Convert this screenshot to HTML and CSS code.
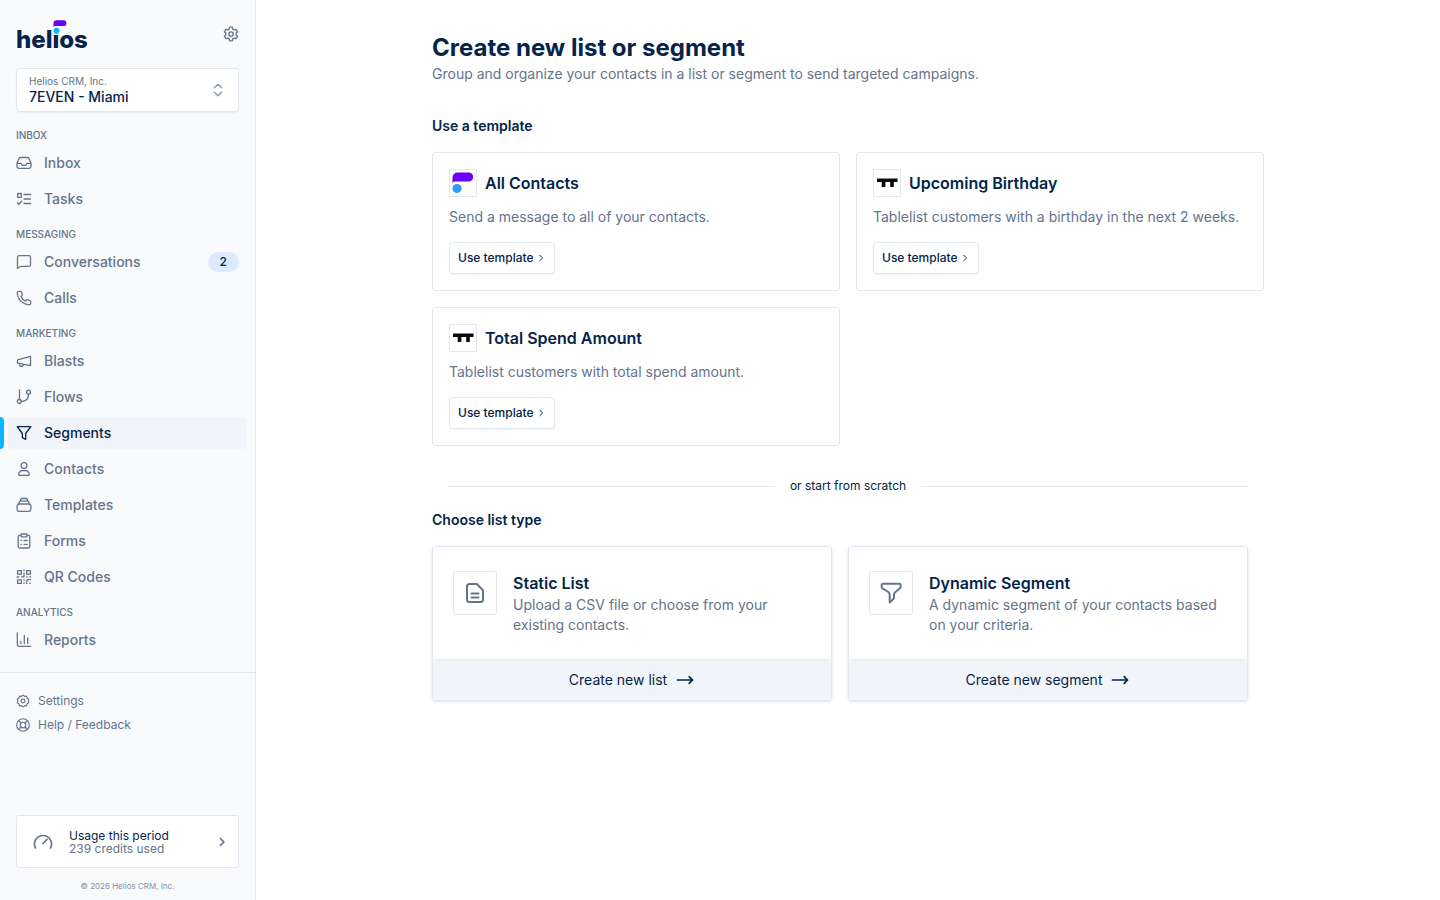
FILE: index.html
```html
<!DOCTYPE html>
<html lang="en">
<head>
<meta charset="utf-8">
<meta name="viewport" content="width=device-width, initial-scale=1">
<title>Create new list or segment</title>
<link rel="stylesheet" href="styles.css">
</head>
<body>
<svg class="sprite" aria-hidden="true">
  <symbol id="tablelist" viewBox="0 0 26 26"><path d="M3 8.500h20.500v3.500h-3.700v5h-3.600v-5h-4.800v5H7.700v-5H3z" fill="#0a0a0a"/></symbol>
  <symbol id="chevron" viewBox="0 0 16 16"><path d="M6 3.500 10.500 8 6 12.500"/></symbol>
  <symbol id="arrow" viewBox="0 0 20 12"><path d="M2.500 6h15M14.200 2.700 17.500 6l-3.300 3.300"/></symbol>
</svg>
<div class="app">
  <aside class="sidebar">
    <header class="brand">
      <a class="logo" href="#">helios<svg class="logo-mark" viewBox="0 0 14 15" aria-hidden="true"><circle cx="3.500" cy="10.500" r="4.300" fill="#f8fafc"/><path d="M.5 7V3.600A3.300 3.300 0 0 1 3.800.3h6.700a2.900 2.900 0 0 1 0 5.800H2.200C1.300 6.100.8 6.400.5 7z" fill="#6a00f4"/><circle cx="3.500" cy="10.800" r="3" fill="#0ab5ff"/></svg></a>
      <button class="icon-button" aria-label="Preferences"><svg class="icon" viewBox="0 0 16 16"><path d="M6.700 1.200h2.600l.5 1.900 1.300.8 1.900-.6 1.700 2.500-1.500 1.300v1.800l1.500 1.300-1.700 2.500-1.900-.6-1.300.8-.5 1.900H6.700l-.5-1.900-1.300-.8-1.900.6-1.700-2.500 1.500-1.300V7.100L1.300 5.800 3 3.300l1.900.6 1.300-.8z"/><circle cx="8" cy="8" r="2.200"/></svg></button>
    </header>
    <button class="account">
      <span class="account-text"><span class="account-org">Helios CRM, Inc.</span><span class="account-name">7EVEN - Miami</span></span>
      <svg class="icon faint" viewBox="0 0 16 16"><path d="M4.300 5.800 8 2.200l3.700 3.600M4.300 10.200 8 13.800l3.700-3.600"/></svg>
    </button>
    <nav class="nav">
      <h2 class="nav-label">INBOX</h2>
      <a class="nav-item" href="#"><svg class="icon" viewBox="0 0 16 16"><path d="M1 8.300h3.500c.5 0 .8.300 1 .7l.3.600c.2.400.6.700 1 .7h2.400c.4 0 .8-.3 1-.7l.3-.6c.2-.4.5-.7 1-.7H15M4.500 2.500h7c.7 0 1.200.3 1.500.9l1.700 4.100c.2.500.3.800.3 1.300v2.700c0 1-.8 1.800-1.800 1.800H2.800c-1 0-1.800-.8-1.800-1.800V8.800c0-.5.100-.8.300-1.300L3 3.400c.3-.6.800-.9 1.500-.9z"/></svg>Inbox</a>
      <a class="nav-item" href="#"><svg class="icon" viewBox="0 0 16 16"><path d="M8 3.500h6.500M8 8h6.500M8 12.500h6.500M1.700 2.500h3.600v3.800H1.700zM1.300 11.600l1.500 1.600 2.800-3"/></svg>Tasks</a>
      <h2 class="nav-label">MESSAGING</h2>
      <a class="nav-item" href="#"><svg class="icon" viewBox="0 0 16 16"><path d="M1.500 14.300V3.200c0-.9.600-1.500 1.500-1.500h10c.9 0 1.500.6 1.500 1.500v7.600c0 .9-.6 1.500-1.500 1.500H5.200c-.5 0-.8.200-1.200.5z"/></svg>Conversations<span class="badge">2</span></a>
      <a class="nav-item" href="#"><svg class="icon" viewBox="0 0 16 16"><path d="M1.300 2.800C1.300 1.900 2 1.300 2.800 1.300h1.600c.6 0 1 .4 1.200.9l.7 2.200c.1.500 0 1-.4 1.300l-.9.8c.8 1.900 2.300 3.600 4.500 4.600l.8-1c.4-.4.900-.5 1.300-.4l2.200.8c.5.200.9.600.9 1.200v1.600c0 .8-.7 1.500-1.500 1.500C6.800 14.500 1.300 9.200 1.300 2.800z"/></svg>Calls</a>
      <h2 class="nav-label">MARKETING</h2>
      <a class="nav-item" href="#"><svg class="icon" viewBox="0 0 16 16"><path d="M1.500 6.900 14.500 3.300v9.400L1.500 10.200zM3.600 10.700v.8c0 1 .8 1.900 1.800 1.900s1.900-.8 1.900-1.900"/></svg>Blasts</a>
      <a class="nav-item" href="#"><svg class="icon" viewBox="0 0 16 16"><path d="M3.500 1v9.500M12.500 5.300c0 4.200-2.600 7-7 7"/><circle cx="3.300" cy="12.500" r="2"/><circle cx="12.500" cy="3.200" r="2"/></svg>Flows</a>
      <a class="nav-item active" href="#" aria-current="page"><svg class="icon" viewBox="0 0 16 16"><path d="M1.200 1.700h13.600L9.700 8.500v5.800l-3.400-1.700V8.500z"/></svg>Segments</a>
      <a class="nav-item" href="#"><svg class="icon" viewBox="0 0 16 16"><circle cx="8" cy="4.500" r="2.900"/><path d="M3.200 14.300c-.3 0-.5-.2-.5-.5 0-2.500 1.800-4.300 4.100-4.300h2.400c2.300 0 4.100 1.800 4.100 4.300 0 .3-.2.500-.5.500z"/></svg>Contacts</a>
      <a class="nav-item" href="#"><svg class="icon" viewBox="0 0 16 16"><path d="M4.600 4V3c0-.9.600-1.500 1.500-1.500h3.800c.9 0 1.500.6 1.500 1.500v1M3 7V5.700C3 4.800 3.600 4.200 4.500 4.200h7c.9 0 1.500.6 1.500 1.500V7"/><rect x="1.200" y="7" width="13.600" height="7.300" rx="1.800"/></svg>Templates</a>
      <a class="nav-item" href="#"><svg class="icon" viewBox="0 0 16 16"><path d="M5.200 2.300H3.700c-.8 0-1.500.6-1.500 1.500v9.700c0 .9.700 1.500 1.500 1.500h8.600c.8 0 1.500-.6 1.500-1.500V3.800c0-.9-.7-1.500-1.500-1.500h-1.500M5.200 1h5.600v2.800H5.200zM5 7.500h.5M8 7.500h3.200M5 11.300h.5M8 11.300h3.200"/></svg>Forms</a>
      <a class="nav-item" href="#"><svg class="icon" viewBox="0 0 16 16"><path d="M1.600 1.600h3.800v3.600H1.600zM10.600 1.600h3.800v3.600h-3.800zM1.600 10.800h3.800v3.600H1.600zM8 1.200v.6M8 4.300v3.500H5.700M1.200 8h1.400M10.700 8h.5M13.700 8h1M8 10.700v.5M8 13.900v.6M10.800 14.500v-3c0-.5.300-.8.800-.8h2.900M13.600 14.200h.6"/></svg>QR Codes</a>
      <h2 class="nav-label">ANALYTICS</h2>
      <a class="nav-item" href="#"><svg class="icon" viewBox="0 0 16 16"><path d="M1.300 1v11.500c0 1 .7 1.800 1.700 1.800h11.700M4.900 9.500v2M8.300 3.300v8.200M11.700 5.900v5.600"/></svg>Reports</a>
    </nav>
    <div class="secondary">
      <a class="secondary-item" href="#"><svg class="icon" viewBox="0 0 16 16"><path d="m8 1.300 1.800 1.400 2.300-.2.500 2.200 2 1.200-.8 2.100.8 2.100-2 1.200-.5 2.200-2.300-.2L8 14.700l-1.800-1.400-2.300.2-.5-2.200-2-1.200.8-2.100-.8-2.100 2-1.200.5-2.200 2.300.2z"/><circle cx="8" cy="8" r="2.200"/></svg>Settings</a>
      <a class="secondary-item" href="#"><svg class="icon" viewBox="0 0 16 16"><circle cx="8" cy="8" r="7.200"/><circle cx="8" cy="8" r="3.200"/><path d="m3 3 2.700 2.700M13 3l-2.700 2.700M3 13l2.700-2.700M13 13l-2.700-2.700"/></svg>Help / Feedback</a>
    </div>
    <a class="usage" href="#">
      <svg class="gauge" viewBox="0 0 20 20"><path d="M2.500 16A8.500 8.500 0 1 1 17.500 16M10 11.500l4-4.200"/></svg>
      <span class="usage-text"><span class="usage-title">Usage this period</span><span>239 credits used</span></span>
      <svg class="usage-chevron" aria-hidden="true"><use href="#chevron"/></svg>
    </a>
    <footer class="copyright">© 2026 Helios CRM, Inc.</footer>
  </aside>
  <main class="main">
    <div class="content">
      <h1 class="title">Create new list or segment</h1>
      <p class="text">Group and organize your contacts in a list or segment to send targeted campaigns.</p>
      <h2 class="subtitle first">Use a template</h2>
      <div class="templates">
        <article class="template">
          <h3 class="template-head"><svg class="thumb" viewBox="0 0 26 26" aria-hidden="true"><path d="M2.500 14V7.500a5 5 0 0 1 5-5h11.200a4.500 4.500 0 0 1 0 9H5c-1.500 0-2.300.8-2.500 2.500z" fill="#6a00f4"/><circle cx="7" cy="18.500" r="4.600" fill="#2d9cfb"/></svg>All Contacts</h3>
          <p class="text">Send a message to all of your contacts.</p>
          <button class="use">Use template<svg class="use-chevron" aria-hidden="true"><use href="#chevron"/></svg></button>
        </article>
        <article class="template">
          <h3 class="template-head"><svg class="thumb" aria-hidden="true"><use href="#tablelist"/></svg>Upcoming Birthday</h3>
          <p class="text">Tablelist customers with a birthday in the next 2 weeks.</p>
          <button class="use">Use template<svg class="use-chevron" aria-hidden="true"><use href="#chevron"/></svg></button>
        </article>
        <article class="template">
          <h3 class="template-head"><svg class="thumb" aria-hidden="true"><use href="#tablelist"/></svg>Total Spend Amount</h3>
          <p class="text">Tablelist customers with total spend amount.</p>
          <button class="use">Use template<svg class="use-chevron" aria-hidden="true"><use href="#chevron"/></svg></button>
        </article>
      </div>
      <div class="divider">or start from scratch</div>
      <h2 class="subtitle">Choose list type</h2>
      <div class="types">
        <article class="type">
          <div class="type-body">
            <span class="type-icon"><svg class="glyph" viewBox="0 0 24 24" aria-hidden="true"><path d="M13.800 3H6.500C5 3 4 4 4 5.500v13C4 20 5 21 6.500 21h11c1.500 0 2.500-1 2.500-2.500V9.200zM8.500 12.500h7M8.500 16.500h7"/></svg></span>
            <div><h3 class="type-title">Static List</h3><p class="text">Upload a CSV file or choose from your existing contacts.</p></div>
          </div>
          <button class="create">Create new list<svg class="arrow" aria-hidden="true"><use href="#arrow"/></svg></button>
        </article>
        <article class="type">
          <div class="type-body">
            <span class="type-icon"><svg class="glyph" viewBox="0 0 24 24" aria-hidden="true"><path d="M4 2.800h16.300c.8 0 1.400.6 1.400 1.400v1.400c0 .8-.4 1.500-1 2l-4.500 3.600c-.8.700-1.200 1.300-1.200 2.300v3c0 .7-.3 1.200-.8 1.600l-3.500 3.300v-7.600c0-1.200-.5-2-1.300-2.800L3.500 7.400c-.6-.6-.9-1.200-.9-2V4.200c0-.8.600-1.400 1.400-1.400z"/></svg></span>
            <div><h3 class="type-title">Dynamic Segment</h3><p class="text">A dynamic segment of your contacts based on your criteria.</p></div>
          </div>
          <button class="create">Create new segment<svg class="arrow" aria-hidden="true"><use href="#arrow"/></svg></button>
        </article>
      </div>
    </div>
  </main>
</div>
</body>
</html>
```

FILE: styles.css
```css
* { box-sizing: border-box; }
body, h1, h2, h3, p { margin: 0; }
body { font-family: Inter, "Liberation Sans", sans-serif; font-size: 14px; line-height: 20px; color: #04244a; background: #fff; }
button { font: inherit; color: inherit; cursor: pointer; }
a { color: inherit; text-decoration: none; }
svg { flex: none; fill: none; stroke-linecap: round; stroke-linejoin: round; }
.sprite { position: absolute; width: 0; height: 0; }

.app { display: flex; min-height: 100vh; }
.sidebar { display: flex; flex-direction: column; flex: none; width: 256px; padding: 16px 16px 8px; background: #f8fafc; border-right: 1px solid #e2e8f0; color: #64748b; }
.brand { display: flex; align-items: center; justify-content: space-between; height: 36px; margin-bottom: 16px; }
.logo { position: relative; font-size: 24px; line-height: 28px; font-weight: 800; color: #04244a; padding-top: 12px; }
.logo-mark { position: absolute; left: 37px; top: 6px; width: 14px; height: 15px; }
.icon { width: 16px; height: 16px; stroke: currentColor; stroke-width: 1.300; }
.faint { color: #8796ac; }
.icon-button { display: flex; padding: 0; border: 0; background: none; }
.account { display: flex; align-items: center; justify-content: space-between; height: 44px; padding: 0 12px; text-align: left; background: #fff; border: 1px solid #e2e8f0; border-radius: 4px; box-shadow: 0 1px 2px rgba(15, 40, 80, .06); }
.account-text { display: flex; flex-direction: column; }
.account-org { font-size: 10px; line-height: 14px; }
.account-name { font-weight: 500; line-height: 18px; color: #04244a; }

.nav { display: flex; flex-direction: column; gap: 4px; padding: 16px 0; }
.nav-label { font-size: 10px; line-height: 15px; font-weight: 500; }
.nav-item + .nav-label { margin-top: 8px; }
.nav-item { display: flex; align-items: center; gap: 12px; height: 32px; margin: 0 -8px; padding: 0 8px; border-radius: 4px; font-weight: 500; }
.active { position: relative; background: #f1f5f9; color: #04244a; }
.active::before { content: ""; position: absolute; left: -8px; top: 0; width: 4px; height: 100%; background: #0ab5ff; border-radius: 0 4px 4px 0; }
.badge { margin-left: auto; padding: 0 12px; font-size: 12px; line-height: 20px; border-radius: 10px; background: #dbeafe; color: #04244a; }

.secondary { display: flex; flex-direction: column; gap: 8px; margin: 0 -16px; padding: 20px 16px; border-top: 1px solid #e2e8f0; }
.secondary-item { display: flex; align-items: center; gap: 8px; font-size: 12px; line-height: 16px; }
.secondary .icon { width: 14px; height: 14px; }
.usage { display: flex; align-items: center; height: 53px; margin-top: auto; padding: 0 10px 0 16px; background: #fff; border: 1px solid #e2e8f0; border-radius: 3px; font-size: 12px; line-height: 13px; }
.gauge { width: 20px; height: 20px; margin-right: 16px; stroke: currentColor; stroke-width: 1.700; }
.usage-text { display: flex; flex-direction: column; flex: 1; }
.usage-title { color: #04244a; }
.usage-chevron { width: 12px; height: 12px; stroke: currentColor; stroke-width: 2.200; }
.copyright { padding-top: 12px; font-size: 8px; line-height: 12px; text-align: center; color: #8391a7; }

.main { flex: 1; min-width: 0; padding: 32px 16px; }
.content { max-width: 832px; margin: 0 auto; }
.title { font-size: 24px; line-height: 32px; font-weight: 700; }
.text { color: #64748b; }
.subtitle { font-size: 14px; line-height: 20px; font-weight: 600; margin-bottom: 16px; }
.first { margin-top: 32px; }
.templates { display: grid; grid-template-columns: 1fr 1fr; gap: 16px; }
.template { padding: 16px; border: 1px solid #e2e8f0; border-radius: 3px; }
.template-head { display: flex; align-items: center; gap: 8px; font-size: 16px; line-height: 24px; font-weight: 600; margin-bottom: 10px; }
.thumb { width: 28px; height: 28px; border: 1px solid #e2e8f0; }
.use { display: flex; align-items: center; gap: 2px; height: 32px; margin-top: 15px; padding: 0 8px; font-size: 12px; font-weight: 500; background: #fff; border: 1px solid #e2e8f0; border-radius: 4px; box-shadow: 0 1px 2px rgba(15, 40, 80, .06); }
.use-chevron { width: 10px; height: 10px; stroke: currentColor; stroke-width: 1.500; }
.divider { display: flex; align-items: center; gap: 16px; margin: 30px 16px 14px; font-size: 12px; }
.divider::before, .divider::after { content: ""; flex: 1; height: 1px; background: #e2e8f0; }
.types { display: grid; grid-template-columns: 1fr 1fr; gap: 16px; padding-right: 16px; }
.type { display: flex; flex-direction: column; border: 1px solid #e2e8f0; border-radius: 3px; box-shadow: 0 1px 3px rgba(15, 40, 80, .12); overflow: hidden; }
.type-body { display: flex; flex: 1; gap: 16px; padding: 24px 20px; }
.type-icon { display: flex; align-items: center; justify-content: center; flex: none; width: 44px; height: 44px; border: 1px solid #e2e8f0; border-radius: 3px; color: #64748b; }
.glyph { width: 24px; height: 24px; stroke: currentColor; stroke-width: 2; }
.type-title { font-size: 16px; line-height: 24px; font-weight: 600; }
.create { display: flex; align-items: center; justify-content: center; gap: 8px; height: 41px; padding: 0; border: 0; border-top: 1px solid #e2e8f0; background: #f1f5f9; }
.arrow { width: 20px; height: 12px; stroke: currentColor; stroke-width: 1.700; }
```
